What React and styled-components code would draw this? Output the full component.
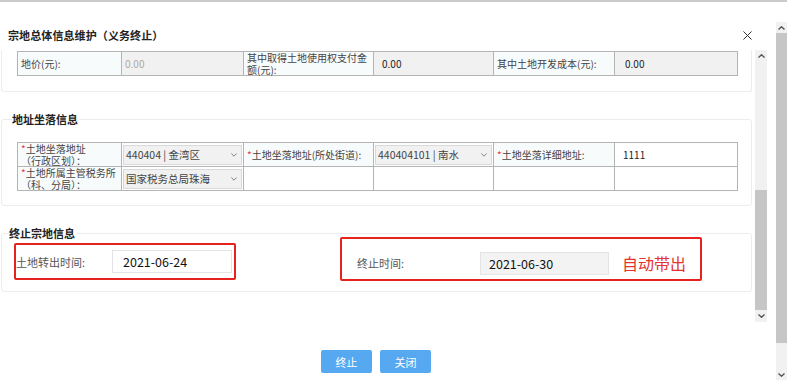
import React from "react";
import styled, { createGlobalStyle } from "styled-components";

const GlobalStyle = createGlobalStyle`
  html, body {
    margin: 0;
    padding: 0;
    background: #fff;
    overflow: hidden;
  }
  body {
    font-family: "Noto Sans CJK SC", "Noto Sans", sans-serif;
    color: #333;
  }
  * {
    box-sizing: border-box;
  }
`;

const Page = styled.div`
  width: 787px;
  height: 380px;
  display: flex;
  flex-direction: column;
`;

const TopRule = styled.div`
  height: 2px;
  background: #cbcbcb;
`;

const Main = styled.div`
  flex: 1;
  display: flex;
`;

const Dialog = styled.div`
  width: 776px;
  display: flex;
  flex-direction: column;
`;

const Header = styled.div`
  height: 48px;
  padding: 18px 24px 0 8px;
  display: flex;
  align-items: center;
  justify-content: space-between;
`;

const Title = styled.div`
  font-size: 11px;
  font-weight: 700;
  color: #222;
  letter-spacing: 0.1px;
`;

const Close = styled.svg`
  width: 9px;
  height: 9px;
  display: block;
`;

const Body = styled.div`
  height: 272px;
  display: flex;
`;

const Content = styled.div`
  width: 755px;
  padding-left: 1px;
  overflow: hidden;
`;

const TopPanel = styled.div`
  width: 751px;
  border: 1px solid #ececec;
  border-top: none;
  border-radius: 0 0 3px 3px;
  padding: 1px 15px 15px;
`;

const Panel = styled.fieldset`
  width: 751px;
  margin: ${(p) => p.$mt}px 0 0;
  border: 1px solid #ececec;
  border-radius: 3px;
  padding: ${(p) => p.$pad};
  min-width: 0;
`;

const Legend = styled.legend`
  font-size: 11px;
  font-weight: 700;
  color: #222;
  line-height: 8px;
  height: 8px;
  padding: 0 2px 0 0;
  margin-left: -5px;
`;

const Table = styled.table`
  border-collapse: collapse;
  table-layout: fixed;
  width: 720px;
  font-size: 10px;
  color: #444;
`;

const Td = styled.td`
  border: 1px solid #b4b4b4;
  height: ${(p) => p.$h || 24}px;
  padding: 0;
  vertical-align: middle;
`;

const LabelCell = styled(Td)`
  background: #f8fbfc;
  padding: 0 2px 0 3px;
  line-height: 11.5px;
  color: #444;
`;

const Star = styled.span`
  color: #e33;
`;

const ValueCell = styled(Td)`
  background: ${(p) => (p.$white ? "#fff" : "#f1f1f1")};
  color: ${(p) => (p.$muted ? "#aaa" : "#222")};
  padding-left: ${(p) => p.$pl || 8}px;
  font-size: 10px;
`;

const SelectCell = styled(Td)`
  background: #fff;
  padding: 1px;
`;

const Select = styled.div`
  height: 20px;
  border: 1px solid #d9d9d9;
  background: #f1f1f1;
  display: flex;
  align-items: center;
  justify-content: space-between;
  padding: 0 4px 0 2px;
  font-size: 10.5px;
  color: #444;
`;

const Chevron = styled.svg`
  width: 6px;
  height: 4px;
  display: block;
`;

const StopRow = styled.div`
  display: flex;
  align-items: flex-start;
`;

const RedBox = styled.div`
  border: 2px solid #e5221d;
  border-radius: 2px;
  width: ${(p) => p.$w}px;
  height: ${(p) => p.$h}px;
  margin-top: ${(p) => p.$mt || 0}px;
  margin-left: ${(p) => p.$ml || 0}px;
  padding: ${(p) => p.$pad};
  display: flex;
  align-items: center;
`;

const FieldLabel = styled.div`
  width: ${(p) => p.$w}px;
  font-size: 11px;
  color: #555;
`;

const DateInput = styled.div`
  width: ${(p) => p.$w}px;
  height: 23px;
  border: 1px solid #e4e4e4;
  background: ${(p) => (p.$readonly ? "#f3f3f3" : "#fff")};
  display: flex;
  align-items: center;
  padding-left: ${(p) => p.$pl}px;
  font-size: 12.5px;
  color: #111;
`;

const AutoNote = styled.div`
  margin-left: 13px;
  font-size: 16px;
  color: #e5332e;
`;

const Footer = styled.div`
  width: 752px;
  padding-top: 28px;
  display: flex;
  justify-content: center;
  gap: 8px;
`;

const Button = styled.button`
  width: 51px;
  height: 23px;
  border: none;
  border-radius: 2px;
  background: #56a9f0;
  color: #fff;
  font-family: inherit;
  font-size: 11px;
  padding: 0;
`;

const ScrollBar = styled.div`
  width: ${(p) => p.$w}px;
  margin-top: ${(p) => p.$mt || 0}px;
  height: ${(p) => p.$h}px;
  display: flex;
  flex-direction: column;
  background: #f1f1f1;
`;

const ArrowBox = styled.div`
  height: 11px;
  display: flex;
  align-items: center;
  justify-content: center;
`;

const Track = styled.div`
  height: ${(p) => p.$h}px;
  background: ${(p) => (p.$thumb ? "#c6c6c6" : "transparent")};
`;

const Arrow = ({ up }) => (
  <ArrowBox>
    <svg width="7" height="4" viewBox="0 0 7 4">
      <polyline
        points={up ? "0.5,3.5 3.5,0.8 6.5,3.5" : "0.5,0.5 3.5,3.2 6.5,0.5"}
        fill="none"
        stroke="#555"
        strokeWidth="1.4"
      />
    </svg>
  </ArrowBox>
);

const Down = () => (
  <Chevron viewBox="0 0 6 4">
    <polyline points="0.3,0.5 3,3.2 5.7,0.5" fill="none" stroke="#777" strokeWidth="0.9" />
  </Chevron>
);

const cols = [104, 122, 130, 120, 121, 123];

const ColGroup = () => (
  <colgroup>
    {cols.map((w, i) => (
      <col key={i} style={{ width: w }} />
    ))}
  </colgroup>
);

const App = () => {
  return (
    <Page>
      <GlobalStyle />
      <TopRule />
      <Main>
        <Dialog>
          <Header>
            <Title>宗地总体信息维护（义务终止）</Title>
            <Close viewBox="0 0 9 9">
              <path d="M0.5 0.5 L8.5 8.5 M8.5 0.5 L0.5 8.5" stroke="#333" strokeWidth="1" />
            </Close>
          </Header>
          <Body>
            <Content>
              <TopPanel>
                <Table>
                  <ColGroup />
                  <tbody>
                    <tr>
                      <LabelCell>地价(元):</LabelCell>
                      <ValueCell $muted $pl={3}>0.00</ValueCell>
                      <LabelCell>其中取得土地使用权支付金额(元):</LabelCell>
                      <ValueCell>0.00</ValueCell>
                      <LabelCell>其中土地开发成本(元):</LabelCell>
                      <ValueCell $pl={10}>0.00</ValueCell>
                    </tr>
                  </tbody>
                </Table>
              </TopPanel>

              <Panel $mt={23} $pad="19px 15px 14px">
                <Legend>地址坐落信息</Legend>
                <Table>
                  <ColGroup />
                  <tbody>
                    <tr>
                      <LabelCell $h={23}>
                        <Star>*</Star>土地坐落地址
                        <br />
                        （行政区划）：
                      </LabelCell>
                      <SelectCell $h={23}>
                        <Select>
                          <span>440404 | 金湾区</span>
                          <Down />
                        </Select>
                      </SelectCell>
                      <LabelCell $h={23}>
                        <Star>*</Star>土地坐落地址(所处街道):
                      </LabelCell>
                      <SelectCell $h={23}>
                        <Select>
                          <span>440404101 | 南水</span>
                          <Down />
                        </Select>
                      </SelectCell>
                      <LabelCell $h={23}>
                        <Star>*</Star>土地坐落详细地址:
                      </LabelCell>
                      <ValueCell $white $h={23}>1111</ValueCell>
                    </tr>
                    <tr>
                      <LabelCell>
                        <Star>*</Star>土地所属主管税务所
                        <br />
                        （科、分局）：
                      </LabelCell>
                      <SelectCell>
                        <Select>
                          <span>国家税务总局珠海</span>
                          <Down />
                        </Select>
                      </SelectCell>
                      <ValueCell $white />
                      <ValueCell $white />
                      <ValueCell $white />
                      <ValueCell $white />
                    </tr>
                  </tbody>
                </Table>
              </Panel>

              <Panel $mt={23} $pad="0 12px 10px">
                <Legend>终止宗地信息</Legend>
                <StopRow>
                  <RedBox $w={222} $h={37} $mt={6} $pad="0 0 0 0">
                    <FieldLabel $w={96}>土地转出时间:</FieldLabel>
                    <DateInput $w={120} $pl={10}>2021-06-24</DateInput>
                  </RedBox>
                  <RedBox $w={362} $h={44} $ml={104} $pad="8px 0 0 15px">
                    <FieldLabel $w={123}>终止时间:</FieldLabel>
                    <DateInput $w={129} $pl={8} $readonly>2021-06-30</DateInput>
                    <AutoNote>自动带出</AutoNote>
                  </RedBox>
                </StopRow>
              </Panel>
            </Content>
            <ScrollBar $w={12} $h={272}>
              <Arrow up />
              <Track $h={129} />
              <Track $thumb $h={120} />
              <Arrow />
            </ScrollBar>
          </Body>
          <Footer>
            <Button>终止</Button>
            <Button>关闭</Button>
          </Footer>
        </Dialog>
        <ScrollBar $w={11} $mt={20} $h={358}>
          <Arrow up />
          <Track $thumb $h={310} />
          <Track $h={26} />
          <Arrow />
        </ScrollBar>
      </Main>
    </Page>
  );
};

export default App;
